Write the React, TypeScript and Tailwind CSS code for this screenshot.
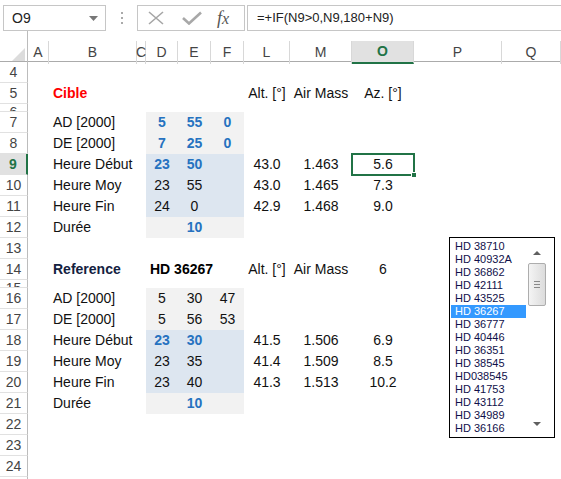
import React from "react";

const COLS =
  "grid grid-cols-[28px_21px_88px_9px_32px_33px_33px_46px_62px_62px_88px_1fr]";
const LETTERS = ["A", "B", "C", "D", "E", "F", "L", "M", "O", "P", "Q"];

type Cell = { t: string; c?: string; left?: boolean };
type RowDef = {
  n: number;
  small?: boolean;
  shade?: "gray" | "blue";
  cells?: Record<string, Cell>;
};

const BLUE = "font-bold text-[#2672c0]";
const b = (t: string): Cell => ({ t, c: BLUE });
const p = (t: string): Cell => ({ t });
const lab = (t: string, c?: string): Cell => ({ t, c, left: true });

const ROWS: RowDef[] = [
  { n: 4 },
  {
    n: 5,
    cells: {
      B: lab("Cible", "font-bold text-[#ff0000]"),
      L: p("Alt. [°]"),
      M: p("Air Mass"),
      O: p("Az. [°]"),
    },
  },
  { n: 6, small: true },
  { n: 7, shade: "gray", cells: { B: lab("AD [2000]"), D: b("5"), E: b("55"), F: b("0") } },
  { n: 8, shade: "gray", cells: { B: lab("DE [2000]"), D: b("7"), E: b("25"), F: b("0") } },
  {
    n: 9,
    shade: "blue",
    cells: { B: lab("Heure Début"), D: b("23"), E: b("50"), L: p("43.0"), M: p("1.463"), O: p("5.6") },
  },
  {
    n: 10,
    shade: "blue",
    cells: { B: lab("Heure Moy"), D: p("23"), E: p("55"), L: p("43.0"), M: p("1.465"), O: p("7.3") },
  },
  {
    n: 11,
    shade: "blue",
    cells: { B: lab("Heure Fin"), D: p("24"), E: p("0"), L: p("42.9"), M: p("1.468"), O: p("9.0") },
  },
  { n: 12, shade: "gray", cells: { B: lab("Durée"), E: b("10") } },
  { n: 13 },
  {
    n: 14,
    cells: {
      B: lab("Reference", "font-bold text-[#14213f]"),
      D: lab("HD 36267", "font-bold text-black"),
      L: p("Alt. [°]"),
      M: p("Air Mass"),
      O: p("6"),
    },
  },
  { n: 15, small: true },
  { n: 16, shade: "gray", cells: { B: lab("AD [2000]"), D: p("5"), E: p("30"), F: p("47") } },
  { n: 17, shade: "gray", cells: { B: lab("DE [2000]"), D: p("5"), E: p("56"), F: p("53") } },
  {
    n: 18,
    shade: "blue",
    cells: { B: lab("Heure Début"), D: b("23"), E: b("30"), L: p("41.5"), M: p("1.506"), O: p("6.9") },
  },
  {
    n: 19,
    shade: "blue",
    cells: { B: lab("Heure Moy"), D: p("23"), E: p("35"), L: p("41.4"), M: p("1.509"), O: p("8.5") },
  },
  {
    n: 20,
    shade: "blue",
    cells: { B: lab("Heure Fin"), D: p("23"), E: p("40"), L: p("41.3"), M: p("1.513"), O: p("10.2") },
  },
  { n: 21, shade: "gray", cells: { B: lab("Durée"), E: b("10") } },
  { n: 22 },
  { n: 23 },
  { n: 24 },
  { n: 25 },
];

const LIST = [
  "HD 38710",
  "HD 40932A",
  "HD 36862",
  "HD 42111",
  "HD 43525",
  "HD 36267",
  "HD 36777",
  "HD 40446",
  "HD 36351",
  "HD 38545",
  "HD038545",
  "HD 41753",
  "HD 43112",
  "HD 34989",
  "HD 36166",
];

function SheetRow({ r }: { r: RowDef }) {
  const sel = r.n === 9;
  return (
    <div className={`${COLS} ${r.small ? "h-[8px]" : "h-[21px]"}`}>
      <div
        className={`flex justify-center overflow-hidden border-b border-[#e1e1e1] text-[14px] ${
          r.small ? "items-start leading-[16px]" : "items-center"
        } ${
          sel
            ? "bg-[#e1e1e1] border-r-2 border-r-[#217346] font-bold text-[#217346]"
            : "border-r border-r-[#bcbcbc] text-[#444]"
        }`}
      >
        {r.n}
      </div>
      {LETTERS.map((l) => {
        const cell = r.cells?.[l];
        const shaded = r.shade && (l === "D" || l === "E" || l === "F");
        const bg = shaded ? (r.shade === "gray" ? "bg-[#f2f2f2]" : "bg-[#dde6f0]") : "";
        return (
          <div
            key={l}
            className={`relative flex items-center whitespace-nowrap text-[14px] ${bg} ${
              cell?.left ? "justify-start pl-[4px]" : "justify-center"
            }`}
          >
            {cell && <span className={`relative z-10 ${cell.c ?? "text-[#111]"}`}>{cell.t}</span>}
            {sel && l === "O" && (
              <div className="absolute -left-px -top-px -right-px -bottom-px z-20 border-2 border-[#217346]">
                <div className="absolute -bottom-[4px] -right-[4px] h-[6px] w-[6px] border border-white bg-[#217346]" />
              </div>
            )}
          </div>
        );
      })}
    </div>
  );
}

function ListBox() {
  return (
    <div className="absolute left-[449px] top-[237px] flex h-[201px] w-[106px] border border-black bg-white font-['Liberation_Sans',sans-serif]">
      <div className="flex w-[76px] flex-col pt-[2px] pl-px">
        {LIST.map((it, i) => (
          <div
            key={it}
            className={`h-[13px] pl-[4px] text-[11px] leading-[13px] ${
              i === 5 ? "bg-[#3399ff] text-white" : "text-[#10104a]"
            }`}
          >
            {it}
          </div>
        ))}
      </div>
      <div className="flex w-[22px] flex-col items-center pt-[12px] pb-[10px]">
        <svg width="8" height="5" viewBox="0 0 8 5">
          <path d="M0 5 L4 1 L8 5 Z" fill="#606060" />
        </svg>
        <div className="mt-[8px] flex h-[43px] w-[18px] flex-col items-center justify-center gap-[2px] rounded-[2px] border border-[#adadad] bg-gradient-to-r from-[#f4f4f4] to-[#dcdcdc]">
          <div className="h-px w-[6px] bg-[#8a8a8a]" />
          <div className="h-px w-[6px] bg-[#8a8a8a]" />
          <div className="h-px w-[6px] bg-[#8a8a8a]" />
        </div>
        <div className="flex-1" />
        <svg width="8" height="5" viewBox="0 0 8 5">
          <path d="M0 0 L4 4 L8 0 Z" fill="#606060" />
        </svg>
      </div>
    </div>
  );
}

export default function App() {
  return (
    <div className="relative h-[479px] w-[561px] overflow-hidden bg-white font-['Liberation_Sans',Arial,sans-serif]">
      {/* formula bar */}
      <div className="flex h-[31px] items-stretch pt-[5px] pl-[3px]">
        <div className="flex w-[103px] items-center justify-between border border-[#c6c6c6] pl-[8px] pr-[7px] text-[14px] text-[#222]">
          <span>O9</span>
          <svg width="9" height="5" viewBox="0 0 9 5">
            <path d="M0 0 L9 0 L4.5 5 Z" fill="#777" />
          </svg>
        </div>
        <div className="flex w-[31px] flex-col items-center justify-center gap-[3px]">
          <div className="h-[2px] w-[2px] bg-[#aaa]" />
          <div className="h-[2px] w-[2px] bg-[#aaa]" />
          <div className="h-[2px] w-[2px] bg-[#aaa]" />
        </div>
        <div className="flex w-[108px] items-center border border-[#c6c6c6] pl-[8px]">
          <svg width="18" height="14" viewBox="0 0 18 14" className="ml-px">
            <path d="M2 1 L16 13 M16 1 L2 13" stroke="#a6a6a6" strokeWidth="1.6" fill="none" />
          </svg>
          <svg width="20" height="14" viewBox="0 0 20 14" className="ml-[17px]">
            <path d="M1 7 L7 12.5 L19 1.5" stroke="#a8a8a8" strokeWidth="2.6" fill="none" />
          </svg>
          <span className="ml-[15px] font-['Liberation_Serif',serif] text-[18px] italic text-[#555]">
            f<span className="text-[16px]">x</span>
          </span>
        </div>
        <div className="ml-[2px] flex flex-1 items-center border-y border-l border-[#c6c6c6] pl-[9px] text-[13px] text-[#222]">
          =+IF(N9&gt;0,N9,180+N9)
        </div>
      </div>

      {/* column headers */}
      <div className={`${COLS} h-[31px] border-b border-[#ababab]`}>
        <div className="relative border-r border-[#bcbcbc]">
          <svg width="13" height="13" viewBox="0 0 13 13" className="absolute bottom-[3px] right-[2px]">
            <path d="M13 0 L13 13 L0 13 Z" fill="#dcdcdc" />
          </svg>
        </div>
        {LETTERS.map((l) => (
          <div key={l} className="flex flex-col">
            <div className="h-[10px]" />
            <div
              className={`flex flex-1 items-center justify-center border-r border-[#d8d8d8] text-[14px] ${
                l === "O"
                  ? "bg-[#e1e1e1] border-b-2 border-b-[#217346] font-bold text-[#217346]"
                  : "text-[#444]"
              }`}
            >
              {l}
            </div>
          </div>
        ))}
      </div>

      {ROWS.map((r) => (
        <SheetRow key={r.n} r={r} />
      ))}

      <ListBox />
    </div>
  );
}
